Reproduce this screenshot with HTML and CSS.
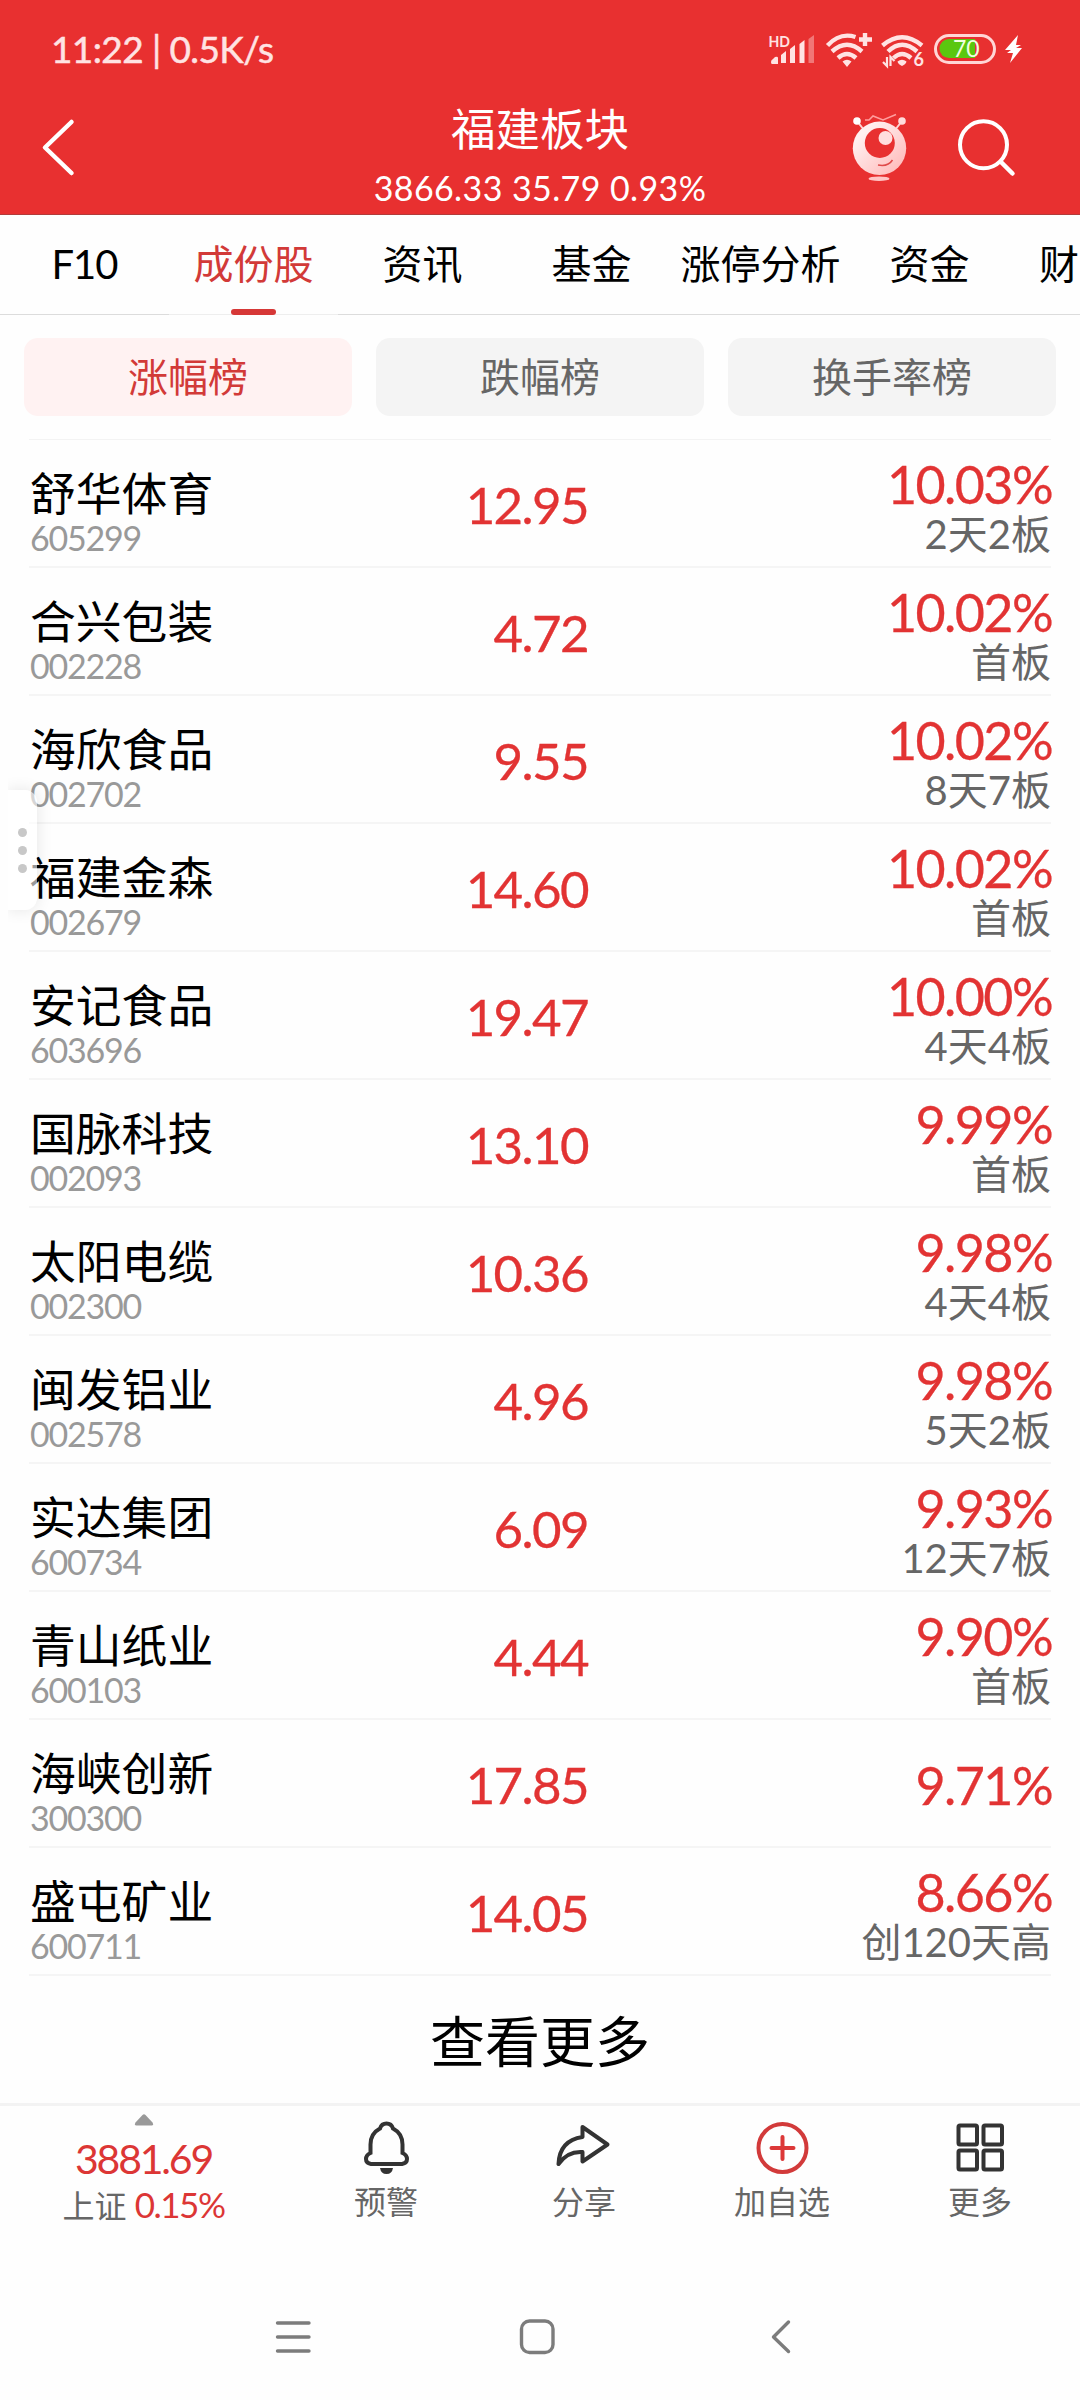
FILE: index.html
```html
<!DOCTYPE html>
<html lang="zh-CN">
<head>
  <meta charset="UTF-8">
  <title>福建板块</title>
  <link rel="stylesheet" href="styles.css">
</head>
<body>
  <header class="header">
    <div class="status">
      <span class="status-time">11:22 | 0.5K/s</span>
      <svg class="status-icons" width="260" height="42" viewBox="766 28 260 42">
        <text class="hd" x="768.500" y="46.500" textLength="21.500" lengthAdjust="spacingAndGlyphs">HD</text>
        <g fill="#ffe3e3">
          <path d="M771 62q0-2 2-3l2-2q3-1 3 1v6h-6q-1 0-1-2z"/>
          <path d="M781 55l5-4v12h-5zM790 49l5-4v18h-5zM799.500 44l5-4v23h-5z"/>
          <path d="M808.500 39l5.500-4v28h-5.500z" opacity=".4"/>
        </g>
        <g fill="none" stroke="#ffe3e3" stroke-width="4.400">
          <path d="M827.500 45.500Q840 32 855.500 37M832 51.500Q847 38 862 51.500M838 58Q847 50 856 58"/>
          <path d="M865 33v13M859 39.500h13"/>
          <path d="M882.500 45.500Q902 29 922 45.500M888 51.500Q902 38 917 51.500M893.500 58Q902 50 911 58"/>
        </g>
        <path fill="#ffe3e3" d="M842.500 61.500Q847 58 851.500 61.500L847 67zM897.500 61.500Q902 58 906.500 61.500Q906 64 902 66Q898 64 897.500 61.500z"/>
        <path fill="none" stroke="#ffe3e3" stroke-width="2.200" d="M887 57v9l-4-4M890.500 66v-9l4 4"/>
        <text class="hd six" x="913.500" y="66">6</text>
        <rect x="935.500" y="35.500" width="59" height="27" rx="13.500" fill="none" stroke="#ffd6d6" stroke-width="3"/>
        <path d="M975 39v19h-26a9.500 9.500 0 0 1 0-19z" fill="#5ac70f"/>
        <text class="battery" x="953" y="57">70</text>
        <path fill="#fff" d="M1018 35l-13 15h6l-4 3h6l-3 10 12-15h-6l5-3h-5z"/>
      </svg>
    </div>
    <div class="title-bar">
      <svg class="back" width="36" height="60" viewBox="40 117 36 60">
        <path d="M71.500 122L45 147.500L71.500 173" fill="none" stroke="#fff" stroke-width="4.500" stroke-linecap="round" stroke-linejoin="round"/>
      </svg>
      <div class="title">
        <h1>福建板块</h1>
        <p>3866.33 35.79 0.93%</p>
      </div>
      <div class="actions">
        <svg width="60" height="72" viewBox="850 112 60 72">
          <defs>
            <linearGradient id="face" x1="0" y1="0" x2="1" y2="1">
              <stop offset="0.200" stop-color="#fff0f0"/>
              <stop offset="1" stop-color="#ffb4b4"/>
            </linearGradient>
          </defs>
          <path d="M857 121l7 9M902 121l-7 9" stroke="#ffd5d5" stroke-width="2"/>
          <circle cx="857" cy="121" r="3.800" fill="#fff"/>
          <circle cx="902" cy="121" r="3.800" fill="#ffdcdc"/>
          <path d="M865 120h4l4-4 10 4 13-5.500" fill="none" stroke="#ff9d9d" stroke-width="1.500"/>
          <circle cx="879.500" cy="148.300" r="26.700" fill="url(#face)"/>
          <circle cx="879.800" cy="143" r="15" fill="#e83030"/>
          <circle cx="885.500" cy="138" r="7" fill="#ffdede"/>
          <path d="M878 165q10 2 14.500-5" fill="none" stroke="#e04a4a" stroke-width="1.500"/>
          <ellipse cx="879" cy="178.700" rx="10.500" ry="2.300" fill="#ffc4c4"/>
        </svg>
        <svg width="60" height="62" viewBox="956 116 60 62">
          <circle cx="983.500" cy="144.700" r="23.500" fill="none" stroke="#fff" stroke-width="4"/>
          <path d="M1001 162l11.500 11.500" stroke="#fff" stroke-width="4.500" stroke-linecap="round"/>
        </svg>
      </div>
    </div>
  </header>

  <nav class="tabs">
    <a>F10</a>
    <a class="active">成份股</a>
    <a>资讯</a>
    <a>基金</a>
    <a>涨停分析</a>
    <a>资金</a>
    <a class="cut">财</a>
  </nav>

  <div class="filters">
    <button class="active">涨幅榜</button>
    <button>跌幅榜</button>
    <button>换手率榜</button>
  </div>

  <main class="list">
    <div class="row">
      <div class="stock"><b>舒华体育</b><i>605299</i></div>
      <div class="price">12.95</div>
      <div class="change"><b>10.03%</b><i>2天2板</i></div>
    </div>
    <div class="row">
      <div class="stock"><b>合兴包装</b><i>002228</i></div>
      <div class="price">4.72</div>
      <div class="change"><b>10.02%</b><i>首板</i></div>
    </div>
    <div class="row">
      <div class="stock"><b>海欣食品</b><i>002702</i></div>
      <div class="price">9.55</div>
      <div class="change"><b>10.02%</b><i>8天7板</i></div>
    </div>
    <div class="row">
      <div class="stock"><b>福建金森</b><i>002679</i></div>
      <div class="price">14.60</div>
      <div class="change"><b>10.02%</b><i>首板</i></div>
    </div>
    <div class="row">
      <div class="stock"><b>安记食品</b><i>603696</i></div>
      <div class="price">19.47</div>
      <div class="change"><b>10.00%</b><i>4天4板</i></div>
    </div>
    <div class="row">
      <div class="stock"><b>国脉科技</b><i>002093</i></div>
      <div class="price">13.10</div>
      <div class="change"><b>9.99%</b><i>首板</i></div>
    </div>
    <div class="row">
      <div class="stock"><b>太阳电缆</b><i>002300</i></div>
      <div class="price">10.36</div>
      <div class="change"><b>9.98%</b><i>4天4板</i></div>
    </div>
    <div class="row">
      <div class="stock"><b>闽发铝业</b><i>002578</i></div>
      <div class="price">4.96</div>
      <div class="change"><b>9.98%</b><i>5天2板</i></div>
    </div>
    <div class="row">
      <div class="stock"><b>实达集团</b><i>600734</i></div>
      <div class="price">6.09</div>
      <div class="change"><b>9.93%</b><i>12天7板</i></div>
    </div>
    <div class="row">
      <div class="stock"><b>青山纸业</b><i>600103</i></div>
      <div class="price">4.44</div>
      <div class="change"><b>9.90%</b><i>首板</i></div>
    </div>
    <div class="row">
      <div class="stock"><b>海峡创新</b><i>300300</i></div>
      <div class="price">17.85</div>
      <div class="change single"><b>9.71%</b></div>
    </div>
    <div class="row">
      <div class="stock"><b>盛屯矿业</b><i>600711</i></div>
      <div class="price">14.05</div>
      <div class="change"><b>8.66%</b><i>创120天高</i></div>
    </div>
  </main>
  <div class="more">查看更多</div>

  <!-- floating side handle -->
  <div class="handle">
    <div class="handle-box"><span></span><span></span><span></span></div>
  </div>

  <footer class="toolbar">
    <div class="index">
      <svg width="20" height="12" viewBox="0 0 20 12"><path d="M8.500 1q1.500-1.500 3 0l7 7.500q1.500 3-1 3h-15q-2.500 0-1-3z" fill="#999"/></svg>
      <b>3881.69</b>
      <p>上证 <em>0.15%</em></p>
    </div>
    <div class="tool">
      <svg width="56" height="56" viewBox="358 2120 56 56">
        <path d="M380 2128.500q1.500-5 6.500-5t6.500 5q9.500 5 9.500 16v8.500q4.500 2 4.500 6t-5 5h-31q-5-1-5-5t4.500-6v-8.500q0-11 9.500-16z" fill="none" stroke="#333" stroke-width="4"/>
        <path d="M380 2168h13q-1 6-6.500 6t-6.500-6z" fill="#333"/>
      </svg>
      <span>预警</span>
    </div>
    <div class="tool">
      <svg width="56" height="56" viewBox="557 2120 56 56">
        <path d="M583.500 2127l25 17.500-25 17v-9.500q-15-1-24 12 1-23.500 24-27z" fill="none" stroke="#333" stroke-width="4" stroke-linejoin="round"/>
      </svg>
      <span>分享</span>
    </div>
    <div class="tool">
      <svg width="56" height="56" viewBox="755 2120 56 56">
        <circle cx="783.500" cy="2148" r="24" fill="none" stroke="#d23a3a" stroke-width="4"/>
        <path d="M783.500 2137v22M772.500 2148h22" stroke="#dc3838" stroke-width="4" stroke-linecap="round"/>
      </svg>
      <span>加自选</span>
    </div>
    <div class="tool">
      <svg width="56" height="56" viewBox="953 2120 56 56">
        <g fill="none" stroke="#333" stroke-width="4">
          <rect x="959.500" y="2125.500" width="18.500" height="19" rx="1.500"/>
          <rect x="984.500" y="2125.500" width="18.500" height="19" rx="1.500"/>
          <rect x="959.500" y="2150.500" width="18.500" height="19" rx="1.500"/>
          <rect x="984.500" y="2150.500" width="18.500" height="19" rx="1.500"/>
        </g>
      </svg>
      <span>更多</span>
    </div>
  </footer>

  <div class="system-nav">
    <svg width="40" height="40" viewBox="273 2317 40 40"><path d="M277.500 2323h31.500M277.500 2337h31.500M277.500 2351h31.500" stroke="#7c7c7c" stroke-width="3.400" stroke-linecap="round"/></svg>
    <svg width="40" height="40" viewBox="517 2317 40 40"><rect x="521.500" y="2321" width="31.500" height="31.500" rx="8" fill="none" stroke="#7c7c7c" stroke-width="3.400"/></svg>
    <svg width="40" height="40" viewBox="761 2317 40 40"><path d="M788.500 2322L773.500 2337L788.500 2351.500" fill="none" stroke="#7c7c7c" stroke-width="3.400" stroke-linecap="round" stroke-linejoin="round"/></svg>
  </div>
</body>
</html>
```
FILE: styles.css
```css
* {
  box-sizing: border-box;
}

body {
  width: 1080px;
  height: 2400px;
  margin: 0;
  overflow: hidden;
  background-color: #fefefe;
  color: #000;
  font-family: Lato, "Noto Sans CJK SC", sans-serif;
}

b, i, em {
  font-style: normal;
  font-weight: normal;
}

h1, p {
  margin: 0;
  font-weight: normal;
}

svg {
  display: block;
  flex: none;
}

/* header */
.header {
  height: 215px;
  background-color: #e83030;
  border-bottom: 1px solid #b23c3a;
  color: #fff;
}

.status {
  display: flex;
  justify-content: space-between;
  align-items: center;
  height: 98px;
  padding: 0 54px 2px 51px;
}

.status-icons {
  margin-top: 2px;
}

.status-time {
  color: #ffe3e3;
  font-size: 37px;
  letter-spacing: -0.600px;
  white-space: nowrap;
  -webkit-text-stroke: 0.500px #ffe3e3;
}

.hd {
  fill: #ffe3e3;
  font-size: 16px;
  font-weight: bold;
}

.six {
  font-size: 18px;
}

.battery {
  fill: #f0ffe0;
  font-size: 23px;
}

.title-bar {
  display: grid;
  grid-template-columns: 200px 1fr 200px;
  align-items: start;
  padding: 0 0 0 40px;
}

.back {
  margin-top: 19px;
}

.title {
  text-align: center;
  margin-right: 40px;
}

.title h1 {
  font-size: 44.500px;
  line-height: 62px;
}

.title p {
  font-size: 34px;
  line-height: 50px;
  margin-top: 3px;
  letter-spacing: 0.400px;
  white-space: nowrap;
}

.actions {
  display: flex;
  gap: 46px;
  padding-top: 14px;
  margin-left: -30px;
}

.actions svg + svg {
  margin-top: 4px;
}

/* tabs */
.tabs {
  display: flex;
  height: 100px;
  overflow: hidden;
}

.tabs a {
  flex: 0 0 169px;
  height: 100px;
  border-bottom: 1px solid #dcdcdc;
  font-size: 40px;
  line-height: 99px;
  text-align: center;
  white-space: nowrap;
}

.tabs a:first-child {
  letter-spacing: -1px;
}

.tabs .active {
  position: relative;
  border-bottom-color: #eee;
  color: #d23a38;
}

.tabs .active::after {
  content: "";
  position: absolute;
  left: 62px;
  bottom: -1px;
  width: 45px;
  height: 6px;
  border-radius: 3px;
  background-color: #d63837;
}

.tabs .cut {
  padding-left: 25px;
  text-align: left;
}

/* filters */
.filters {
  display: grid;
  grid-template-columns: repeat(3, 1fr);
  gap: 24px;
  padding: 23px 24px;
}

.filters button {
  height: 78px;
  padding: 0;
  border: none;
  border-radius: 14px;
  background-color: #f4f4f4;
  color: #666;
  font-family: inherit;
  font-size: 40px;
  line-height: 77px;
}

.filters .active {
  background-color: #fff2f2;
  color: #d23a38;
}

/* stock list */
.list {
  margin: 0 29px;
  border-top: 1px solid #f3f3f3;
}

.row {
  display: grid;
  grid-template-columns: 300px 259px 1fr;
  height: 128px;
  border-bottom: 2px solid #f5f5f5;
}

.row b, .row i {
  display: block;
}

.stock {
  padding-left: 1px;
}

.stock b {
  margin-top: 25px;
  font-size: 45.800px;
  line-height: 58px;
}

.stock i {
  color: #999;
  font-size: 34px;
  line-height: 29px;
  letter-spacing: -1.200px;
}

.price {
  color: #e23333;
  font-size: 51px;
  line-height: 130px;
  letter-spacing: -1.600px;
  text-align: right;
  -webkit-text-stroke: 0.300px #e23333;
}

.change {
  padding-top: 19px;
  color: #666;
  text-align: right;
}

.change.single {
  padding-top: 40px;
}

.change b {
  margin-right: -1px;
  color: #e23333;
  font-size: 52px;
  line-height: 50px;
  letter-spacing: -1.600px;
  -webkit-text-stroke: 0.300px #e23333;
}

.change i {
  font-size: 40px;
  line-height: 51px;
}

.more {
  height: 127px;
  font-size: 55px;
  line-height: 130px;
  text-align: center;
}

.handle {
  position: absolute;
  left: 8px;
  top: 770px;
  width: 50px;
  height: 160px;
  overflow: hidden;
}

.handle-box {
  display: flex;
  flex-direction: column;
  align-items: center;
  justify-content: center;
  gap: 9px;
  width: 29px;
  height: 120px;
  margin-top: 20px;
  border-radius: 0 12px 12px 0;
  background-color: rgba(255, 255, 255, 0.6);
  box-shadow: 0 0 16px rgba(0, 0, 0, 0.1);
}

.handle-box span {
  width: 9px;
  height: 9px;
  border-radius: 50%;
  background-color: #c8c8c8;
}

/* bottom toolbar */
.toolbar {
  display: grid;
  grid-template-columns: 287px repeat(4, 198px);
  height: 170px;
  border-top: 3px solid #f3f3f3;
}

.index, .tool {
  display: flex;
  flex-direction: column;
  align-items: center;
}

.index svg {
  margin-top: 8px;
}

.index b {
  margin-top: 8px;
  color: #dc3635;
  font-size: 41px;
  line-height: 50px;
  letter-spacing: -2.200px;
}

.index p {
  color: #666;
  font-size: 32px;
  line-height: 41px;
}

.index em {
  color: #dc3635;
  font-size: 35px;
  letter-spacing: -1.500px;
}

.tool svg {
  margin-top: 14px;
}

.tool span {
  color: #666;
  font-size: 32px;
  line-height: 52px;
}

.system-nav {
  display: flex;
  gap: 204px;
  padding: 44px 0 0 273px;
}
```
